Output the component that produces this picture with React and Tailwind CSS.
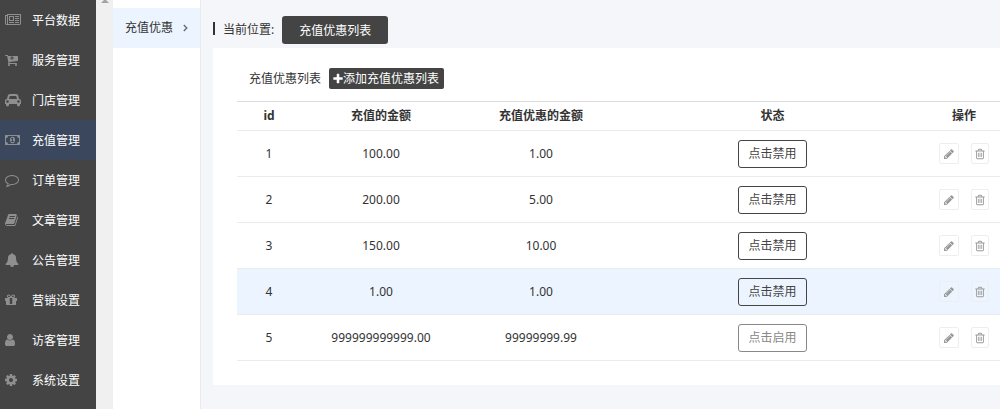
import React, { useState } from 'react';
import clsx from 'clsx';

const glyphs = {
  newspaper: {
    box: '0 0 2048 1792',
    size: 'h-3.5 w-4',
    d: 'M1024 512h-384v384h384v-384zm128 640v128h-640v-128h640zm0-768v640h-640v-640h640zm640 768v128h-512v-128h512zm0-256v128h-512v-128h512zm0-256v128h-512v-128h512zm0-256v128h-512v-128h512zm-1536 960v-960h-128v960q0 26 19 45t45 19 45-19 19-45zm1664 0v-1088h-1536v1088q0 33-11 64h1483q26 0 45-19t19-45zm128-1216v1216q0 80-56 136t-136 56h-1664q-80 0-136-56t-56-136v-1088h256v-128h1792z',
  },
  cart: {
    box: '64 0 1664 1792',
    size: 'h-3.5 w-[13px]',
    d: 'M1216 640q0-26-19-45t-45-19h-128v-128q0-26-19-45t-45-19-45 19-19 45v128h-128q-26 0-45 19t-19 45 19 45 45 19h128v128q0 26 19 45t45 19 45-19 19-45v-128h128q26 0 45-19t19-45zm-512 896q0 53-37.5 90.5t-90.5 37.5-90.5-37.5-37.5-90.5 37.5-90.5 90.5-37.5 90.5 37.5 37.5 90.5zm896 0q0 53-37.5 90.5t-90.5 37.5-90.5-37.5-37.5-90.5 37.5-90.5 90.5-37.5 90.5 37.5 37.5 90.5zm128-1088v512q0 24-16 42.5t-41 21.5l-1044 122q1 7 4.5 21.5t6 26.5 2.5 22q0 16-24 64h920q26 0 45 19t19 45-19 45-45 19h-1024q-26 0-45-19t-19-45q0-14 11-39.5t29.5-59.5 20.5-38l-177-823h-204q-26 0-45-19t-19-45 19-45 45-19h256q16 0 28.5 6.5t20 15.5 13 24.5 7.5 26.5 5.5 29.5 4.5 25.5h1201q26 0 45 19t19 45z',
  },
  car: {
    box: '0 0 2048 1792',
    size: 'h-3.5 w-4',
    d: 'M480 1088q0-66-47-113t-113-47-113 47-47 113 47 113 113 47 113-47 47-113zm36-320h1016l-89-357q-2-8-14-17.5t-21-9.5h-768q-9 0-21 9.5t-14 17.5zm1372 320q0-66-47-113t-113-47-113 47-47 113 47 113 113 47 113-47 47-113zm160-96v384q0 14-9 23t-23 9h-96v128q0 80-56 136t-136 56-136-56-56-136v-128h-1024v128q0 80-56 136t-136 56-136-56-56-136v-128h-96q-14 0-23-9t-9-23v-384q0-93 65.5-158.5t158.5-65.5h28l105-419q23-94 104-157.5t179-63.5h768q98 0 179 63.5t104 157.5l105 419h28q93 0 158.5 65.5t65.5 158.5z',
  },
  money: {
    box: '0 0 1920 1792',
    size: 'h-3.5 w-[15px]',
    d: 'M768 1152h384v-96h-128v-448h-114l-148 137 77 80q42-37 55-57h2v288h-128v96zm512-256q0 70-21 142t-59.5 134-101.5 101-138 39-138-39-101.5-101-59.5-134-21-142 21-142 59.5-134 101.5-101 138-39 138 39 101.5 101 59.5 134 21 142zm512 256v-512q-106 0-181-75t-75-181h-1152q0 106-75 181t-181 75v512q106 0 181 75t75 181h1152q0-106 75-181t181-75zm128-832v1152q0 26-19 45t-45 19h-1792q-26 0-45-19t-19-45v-1152q0-26 19-45t45-19h1792q26 0 45 19t19 45z',
  },
  comment: {
    box: '0 0 1792 1792',
    size: 'h-3.5 w-3.5',
    d: 'M896 384q-204 0-381.5 69.5t-282 187.5-104.5 255q0 112 71.5 213.5t201.5 175.5l87 50-27 96q-24 91-70 172 152-63 275-171l43-38 57 6q69 8 130 8 204 0 381.5-69.5t282-187.5 104.5-255-104.5-255-282-187.5-381.5-69.5zm896 512q0 174-120 321.5t-326 233-450 85.5q-70 0-145-8-198 175-460 242-49 14-114 22h-5q-15 0-27-10.5t-16-27.5v-1q-3-4-.5-12t2-10 4.5-9.5l6-9 7-8.5 8-9q7-8 31-34.5t34.5-38 31-39.5 32.5-51 27-59 26-76q-157-89-247.5-220t-90.5-281q0-174 120-321.5t326-233 450-85.5 450 85.5 326 233 120 321.5z',
  },
  book: {
    box: '64 0 1664 1792',
    size: 'h-3.5 w-[13px]',
    d: 'M1703 478q40 57 18 129l-275 906q-19 64-76.5 107.5t-122.5 43.5h-923q-77 0-148.5-53.5t-99.5-131.5q-24-67-2-127 0-4 3-27t4-37q1-8-3-21.5t-3-19.5q2-11 8-21t16.5-23.5 16.5-23.5q23-38 45-91.5t30-91.5q3-10 .5-30t-.5-28q3-11 17-28t17-23q21-36 42-92t25-90q1-9-2.5-32t.5-28q4-13 22-30.5t22-22.5q19-26 42.5-84.5t27.5-96.5q1-8-3-25.5t-2-26.5q2-8 9-18t18-23 17-21q8-12 16.5-30.5t15-35 16-36 19.5-32 26.5-23.5 36-11.5 47.5 5.5l-1 3q38-9 51-9h761q74 0 114 56t18 130l-274 906q-36 119-71.5 153.5t-128.5 34.5h-869q-27 0-38 15-11 16-1 43 24 70 144 70h923q29 0 56-15.5t35-41.5l300-987q7-22 5-57 38 15 59 43zm-1064 2q-4 13 2 22.5t20 9.5h608q13 0 25.5-9.5t16.5-22.5l21-64q4-13-2-22.5t-20-9.5h-608q-13 0-25.5 9.5t-16.5 22.5zm-83 256q-4 13 2 22.5t20 9.5h608q13 0 25.5-9.5t16.5-22.5l21-64q4-13-2-22.5t-20-9.5h-608q-13 0-25.5 9.5t-16.5 22.5z',
  },
  bell: {
    box: '0 0 1792 1792',
    size: 'h-3.5 w-3.5',
    d: 'M912 1696q0-16-16-16-59 0-101.5-42.5t-42.5-101.5q0-16-16-16t-16 16q0 73 51.5 124.5t124.5 51.5q16 0 16-16zm816-288q0 52-38 90t-90 38h-448q0 106-75 181t-181 75-181-75-75-181h-448q-52 0-90-38t-38-90q50-42 91-88t85-119.5 74.5-158.5 50-206 19.5-260q0-152 117-282.5t307-158.5q-8-19-8-39 0-40 28-68t68-28 68 28 28 68q0 20-8 39 190 28 307 158.5t117 282.5q0 139 19.5 260t50 206 74.5 158.5 85 119.5 91 88z',
  },
  gift: {
    box: '128 0 1536 1792',
    size: 'h-3.5 w-3',
    d: 'M1056 1356v-716h-320v716q0 25 18 38.5t46 13.5h192q28 0 46-13.5t18-38.5zm-456-844h195l-126-161q-26-31-69-31-40 0-68 28t-28 68 28 68 68 28zm688-96q0-40-28-68t-68-28q-43 0-69 31l-125 161h194q40 0 68-28t28-68zm376 256v320q0 14-9 23t-23 9h-96v416q0 40-28 68t-68 28h-1088q-40 0-68-28t-28-68v-416h-96q-14 0-23-9t-9-23v-320q0-14 9-23t23-9h440q-93 0-158.5-65.5t-65.5-158.5 65.5-158.5 158.5-65.5q107 0 168 77l128 165 128-165q61-77 168-77 93 0 158.5 65.5t65.5 158.5-65.5 158.5-158.5 65.5h440q14 0 23 9t9 23z',
  },
  user: {
    box: '256 0 1280 1792',
    size: 'h-3.5 w-2.5',
    d: 'M1536 1399q0 109-62.5 187t-150.5 78h-854q-88 0-150.5-78t-62.5-187q0-85 8.5-160.5t31.5-152 58.5-131 94-89 134.5-34.5q131 128 313 128t313-128q76 0 134.5 34.5t94 89 58.5 131 31.5 152 8.5 160.5zm-256-887q0 159-112.5 271.5t-271.5 112.5-271.5-112.5-112.5-271.5 112.5-271.5 271.5-112.5 271.5 112.5 112.5 271.5z',
  },
  cog: {
    box: '128 0 1536 1792',
    size: 'h-3.5 w-3',
    d: 'M1152 896q0-106-75-181t-181-75-181 75-75 181 75 181 181 75 181-75 75-181zm512-109v222q0 12-8 23t-20 13l-185 28q-19 54-39 91 35 50 107 138 10 12 10 25t-9 23q-27 37-99 108t-94 71q-12 0-26-9l-138-108q-44 23-91 38-16 136-29 186-7 28-36 28h-222q-14 0-24.5-8.5t-11.5-21.5l-28-184q-49-16-90-37l-141 107q-10 9-25 9-14 0-25-11-126-114-165-168-7-10-7-23 0-12 8-23 15-21 51-66.5t54-70.5q-27-50-41-99l-183-27q-13-2-21-12.5t-8-23.5v-222q0-12 8-23t19-13l186-28q14-46 39-92-40-57-107-138-10-12-10-24 0-10 9-23 26-36 98.5-107.5t94.5-71.5q13 0 26 10l138 107q44-23 91-38 16-136 29-186 7-28 36-28h222q14 0 24.5 8.5t11.5 21.5l28 184q49 16 90 37l142-107q9-9 24-9 13 0 25 10 129 119 165 170 7 8 7 22 0 12-8 23-15 21-51 66.5t-54 70.5q26 50 41 98l183 28q13 2 21 12.5t8 23.5z',
  },
  plus: {
    box: '192 0 1408 1792',
    size: 'h-3 w-2.5',
    d: 'M1600 736v192q0 40-28 68t-68 28h-416v416q0 40-28 68t-68 28h-192q-40 0-68-28t-28-68v-416h-416q-40 0-68-28t-28-68v-192q0-40 28-68t68-28h416v-416q0-40 28-68t68-28h192q40 0 68 28t28 68v416h416q40 0 68 28t28 68z',
  },
  pencil: {
    box: '128 0 1536 1792',
    size: 'h-3 w-2.5',
    d: 'M491 1536l91-91-235-235-91 91v107h128v128h107zm523-928q0-22-22-22-10 0-17 7l-542 542q-7 7-7 17 0 22 22 22 10 0 17-7l542-542q7-7 7-17zm-54-192l416 416-832 832h-416v-416zm683 96q0 53-37 90l-166 166-416-416 166-165q36-38 90-38 53 0 91 38l235 234q37 39 37 91z',
  },
  trash: {
    box: '192 0 1408 1792',
    size: 'h-3 w-2.5',
    d: 'M704 736v576q0 14-9 23t-23 9h-64q-14 0-23-9t-9-23v-576q0-14 9-23t23-9h64q14 0 23 9t9 23zm256 0v576q0 14-9 23t-23 9h-64q-14 0-23-9t-9-23v-576q0-14 9-23t23-9h64q14 0 23 9t9 23zm256 0v576q0 14-9 23t-23 9h-64q-14 0-23-9t-9-23v-576q0-14 9-23t23-9h64q14 0 23 9t9 23zm128 724v-948h-896v948q0 22 7 40.5t14.5 27 10.5 8.5h832q3 0 10.5-8.5t14.5-27 7-40.5zm-672-1076h448l-48-117q-7-9-17-11h-317q-10 2-17 11zm928 32v64q0 14-9 23t-23 9h-96v948q0 83-47 143.5t-113 60.5h-832q-66 0-113-58.5t-47-141.5v-952h-96q-14 0-23-9t-9-23v-64q0-14 9-23t23-9h309l70-167q15-37 54-63t79-26h320q40 0 79 26t54 63l70 167h309q14 0 23 9t9 23z',
  },
};

function Icon({ name }) {
  const { box, size, d } = glyphs[name];
  return (
    <svg viewBox={box} className={clsx('shrink-0', size)} fill="currentColor" aria-hidden="true">
      <path d={d} />
    </svg>
  );
}

const menu = [
  { icon: 'newspaper', label: '平台数据' },
  { icon: 'cart', label: '服务管理' },
  { icon: 'car', label: '门店管理' },
  { icon: 'money', label: '充值管理' },
  { icon: 'comment', label: '订单管理' },
  { icon: 'book', label: '文章管理' },
  { icon: 'bell', label: '公告管理' },
  { icon: 'gift', label: '营销设置' },
  { icon: 'user', label: '访客管理' },
  { icon: 'cog', label: '系统设置' },
];

const initialRows = [
  { id: 1, amount: '100.00', bonus: '1.00', enabled: true },
  { id: 2, amount: '200.00', bonus: '5.00', enabled: true },
  { id: 3, amount: '150.00', bonus: '10.00', enabled: true },
  { id: 4, amount: '1.00', bonus: '1.00', enabled: true },
  { id: 5, amount: '999999999999.00', bonus: '99999999.99', enabled: false },
];

export default function App() {
  const [active, setActive] = useState('充值管理');
  const [rows, setRows] = useState(initialRows);
  const [current, setCurrent] = useState(4);

  const toggle = (id) =>
    setRows(rows.map((r) => (r.id === id ? { ...r, enabled: !r.enabled } : r)));

  return (
    <div className="flex min-h-screen overflow-hidden bg-[#f5f6f9] font-['Noto_Sans','Noto_Sans_CJK_SC',sans-serif] text-xs text-[#333]">
      {/* Main menu */}
      <nav className="w-24 shrink-0 bg-[#444]">
        {menu.map((item) => (
          <a
            key={item.label}
            href="#"
            onClick={() => setActive(item.label)}
            className={clsx('flex h-10 items-center gap-[11px] pl-[5px] text-white', active === item.label && 'bg-[#3a475d]')}
          >
            <span className="flex w-4 text-[#8f8f8f]">
              <Icon name={item.icon} />
            </span>
            <span className="pt-0.5">{item.label}</span>
          </a>
        ))}
      </nav>

      {/* Scroll track */}
      <div className="flex w-[17px] shrink-0 justify-center bg-[#f0f0f0]">
        <svg viewBox="0 0 8 3" className="h-[3px] w-2" fill="#a3a3a3" aria-hidden="true">
          <path d="M3 0h2l3 3H0z" />
        </svg>
      </div>

      {/* Submenu */}
      <nav className="w-22 shrink-0 border-r border-[#eaeaea] bg-white pt-2">
        <a href="#" className="flex h-10 items-center justify-between bg-[#ecf5ff] px-3">
          <span>充值优惠</span>
          <svg viewBox="0 0 5 8" className="h-2 w-[5px]" fill="none" stroke="#666" strokeWidth="1.3" aria-hidden="true">
            <path d="M.8 1 3.8 4 .8 7" />
          </svg>
        </a>
      </nav>

      <main className="min-w-0 flex-1 pl-3">
        <div className="flex h-12 items-end pb-1">
          <div className="flex h-7 items-center gap-2">
            <span className="mb-1 h-[13px] w-0.5 bg-[#333]" />
            <span>当前位置:</span>
            <button className="h-7 rounded-[3px] bg-[#444] px-[17px] pt-0.5 text-white">充值优惠列表</button>
          </div>
        </div>

        <section className="bg-white pt-5 pb-6 pl-6">
          <div className="flex h-[21px] items-center gap-2 pl-3">
            <h1>充值优惠列表</h1>
            <button className="flex h-[21px] items-center rounded-[2px] bg-[#444] pr-[5px] pl-1 text-white">
              <Icon name="plus" />
              添加充值优惠列表
            </button>
          </div>

          <div className="-mr-1 mt-3">
            <table className="w-full table-fixed border-separate border-spacing-0 text-center">
              <colgroup>
                <col className="w-16" />
                <col className="w-40" />
                <col className="w-40" />
                <col />
                <col className="w-20" />
              </colgroup>
              <thead>
                <tr className="h-[30px]">
                  {['id', '充值的金额', '充值优惠的金额', '状态', '操作'].map((h) => (
                    <th key={h} className="border-t border-b border-t-[#ddd] border-b-[#ebebeb] p-0 font-bold">
                      {h}
                    </th>
                  ))}
                </tr>
              </thead>
              <tbody className="[&_td]:border-b [&_td]:border-[#ebebeb] [&_td]:p-0">
                {rows.map((row) => (
                  <tr
                    key={row.id}
                    onMouseEnter={() => setCurrent(row.id)}
                    className={clsx('h-[46px]', current === row.id && 'bg-[#ecf5ff]')}
                  >
                    <td>{row.id}</td>
                    <td>{row.amount}</td>
                    <td>{row.bonus}</td>
                    <td>
                      <button
                        onClick={() => toggle(row.id)}
                        className={clsx(
                          'h-7 rounded-[3px] border px-[9px] align-middle',
                          row.enabled ? 'border-[#444] text-[#444]' : 'border-[#888] text-[#888]'
                        )}
                      >
                        {row.enabled ? '点击禁用' : '点击启用'}
                      </button>
                    </td>
                    <td>
                      <div className="flex justify-center gap-3 text-[#999]">
                        <button aria-label="编辑" className="flex h-[21px] items-center rounded-[2px] border border-[#eee] px-1">
                          <Icon name="pencil" />
                        </button>
                        <button aria-label="删除" className="flex h-[21px] items-center rounded-[2px] border border-[#eee] px-[3px]">
                          <Icon name="trash" />
                        </button>
                      </div>
                    </td>
                  </tr>
                ))}
              </tbody>
            </table>
          </div>
        </section>
      </main>
    </div>
  );
}
